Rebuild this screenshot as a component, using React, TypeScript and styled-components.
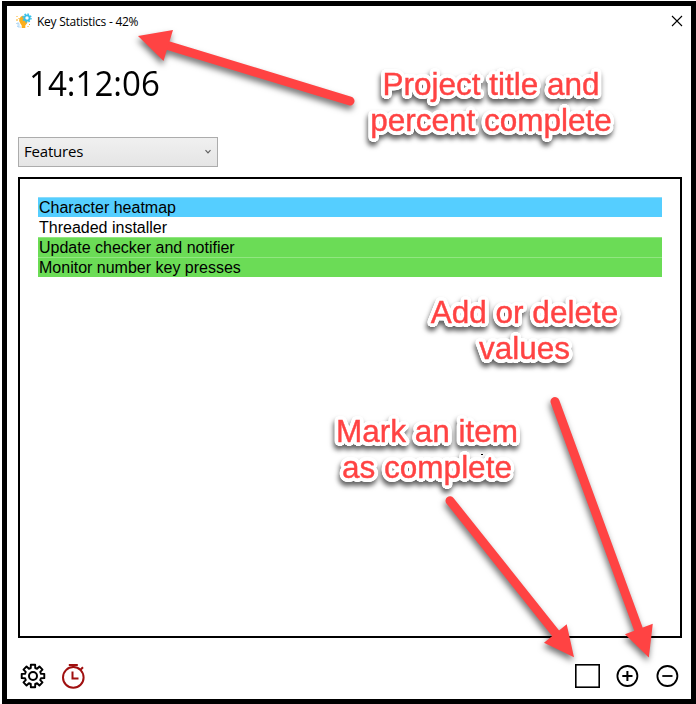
import React from "react";
import styled, { createGlobalStyle } from "styled-components";

const GlobalStyle = createGlobalStyle`
  * { box-sizing: border-box; }
  body { margin: 0; background: #fff; color: #000; overflow: hidden; }
  svg { display: block; }
`;

const Stage = styled.div`
  position: relative;
  width: 696px;
  height: 704px;
  padding: 1px 0 0 2px;
  overflow: hidden;
`;

const Window = styled.main`
  display: flex;
  flex-direction: column;
  width: 694px;
  height: 703px;
  border: 5px solid #000;
  padding: 0 9px 0 11px;
  background: #fff;
`;

const TitleBar = styled.header`
  display: flex;
  align-items: center;
  height: 30px;
  margin-left: -3px;
`;

const Title = styled.h1`
  flex: 1;
  margin: 2px 0 0 5px;
  font: 400 12px/16px "Open Sans", sans-serif;
  letter-spacing: -0.25px;
  white-space: nowrap;
`;

const CloseButton = styled.button`
  display: flex;
  margin-right: -1px;
  padding: 0;
  border: 0;
  background: none;
`;

const Clock = styled.div`
  height: 50px;
  margin: 21px 0 0 11px;
  font: 400 35.5px/50px "Open Sans", sans-serif;
  transform: scaleX(0.932);
  transform-origin: left;
`;

const Select = styled.button`
  display: flex;
  align-items: center;
  justify-content: space-between;
  flex: none;
  width: 200px;
  height: 30px;
  margin-top: 30px;
  padding: 0 5px 1px;
  border: 1px solid #acacac;
  background: linear-gradient(#f0f0f0, #e5e5e5);
  color: #000;
  font: 400 15px/27px "Open Sans", sans-serif;
  letter-spacing: -0.2px;
`;

const List = styled.ul`
  flex: none;
  height: 461px;
  margin: 10px 0 0;
  padding: 18px;
  border: 2px solid #000;
  list-style: none;
`;

const Item = styled.li<{ $fill: string; $edge: string }>`
  height: 20px;
  padding-left: 1px;
  border-top: 1px solid ${(p) => p.$edge};
  background: ${(p) => p.$fill};
  font: 400 16px/19px "Liberation Sans", Arial, sans-serif;
`;

const Footer = styled.footer`
  display: flex;
  align-items: center;
  gap: 12px;
  height: 28px;
  margin-top: 24px;
`;

const IconButton = styled.button`
  display: flex;
  padding: 0;
  border: 0;
  background: none;
`;

const Spacer = styled.div`
  flex: 1;
`;

const halo = Array.from({ length: 24 }, (_, i) => {
  const a = (i * Math.PI) / 12;
  return `${(3.8 * Math.cos(a)).toFixed(2)}px ${(3.8 * Math.sin(a)).toFixed(2)}px 0 #fff`;
})
  .concat(["2px 0 0 #fff", "-2px 0 0 #fff", "0 2px 0 #fff", "0 -2px 0 #fff"])
  .join(", ");

const Callout = styled.div<{ $x: number; $y: number }>`
  position: absolute;
  left: ${(p) => p.$x}px;
  top: ${(p) => p.$y}px;
  transform: translateX(-50%);
  color: #ff4343;
  font: 400 31.5px/36.4px "Liberation Sans", Arial, sans-serif;
  text-align: center;
  white-space: pre;
  -webkit-text-stroke: 0.4px #ff4343;
  text-shadow: ${halo};
  filter: drop-shadow(-1px 4px 2.5px rgba(0, 0, 0, 0.62));
`;

const Arrows = styled.svg`
  position: absolute;
  left: 0;
  top: 0;
  pointer-events: none;
  filter: drop-shadow(-1px 4px 3px rgba(0, 0, 0, 0.55));
`;

const Speck = styled.i`
  position: absolute;
  left: 481px;
  top: 454px;
  width: 2px;
  height: 1px;
  background: #000;
`;

const rows = [
  { text: "Character heatmap", fill: "#55ceff", edge: "#8bdcfb" },
  { text: "Threaded installer", fill: "#fff", edge: "#fff" },
  { text: "Update checker and notifier", fill: "#6bdc56", edge: "#91e681" },
  { text: "Monitor number key presses", fill: "#6bdc56", edge: "#91e681" },
];

const gearPath = (() => {
  const pts: string[] = [];
  for (let i = 0; i < 8; i++) {
    const a = (i * Math.PI) / 4;
    [
      [-0.27, 8.3],
      [-0.19, 11.5],
      [0.19, 11.5],
      [0.27, 8.3],
    ].forEach(([d, r]) =>
      pts.push(`${(14 + r * Math.sin(a + d)).toFixed(2)} ${(14 - r * Math.cos(a + d)).toFixed(2)}`)
    );
  }
  return `M${pts.join("L")}Z`;
})();

const AppIcon = () => (
  <svg width="17" height="17" viewBox="0 0 17 17">
    <path d="M1 10.5h3v3H2M3 9v5h3" fill="none" stroke="#b9dcf5" />
    <path d="M8.5 2.5a4.8 4.8 0 0 0-3 8.2l1.2 1.8v2.5h3.6v-2.5l2-2.4V7L9 6z" fill="#fcaf1b" />
    <path d="M1.5 3.5h1M3.5 5.5h1M1 7h2" stroke="#fcaf1b" />
    <path d="M14 11.5h1M12.5 13.5h1" stroke="#fcaf1b" />
    <circle cx="12" cy="5" r="2.6" fill="none" stroke="#38bfe8" strokeWidth="1.8" />
    <circle cx="12" cy="5" r="4" fill="none" stroke="#38bfe8" strokeWidth="1.4" strokeDasharray="1.57 1.57" />
  </svg>
);

const Arrow = ({ from, base, head }: { from: string; base: string; head: string }) => (
  <g>
    <path d={`M${from}L${base}`} stroke="#ff4343" strokeWidth="9" strokeLinecap="round" />
    <path d={`M${head}Z`} fill="#ff4343" />
  </g>
);

export default function App() {
  return (
    <Stage>
      <GlobalStyle />
      <Window>
        <TitleBar>
          <AppIcon />
          <Title>Key Statistics - 42%</Title>
          <CloseButton aria-label="Close">
            <svg width="12" height="12" viewBox="0 0 12 12">
              <path d="M1 1l10 10M11 1L1 11" stroke="#000" strokeWidth="1.1" />
            </svg>
          </CloseButton>
        </TitleBar>
        <Clock>14:12:06</Clock>
        <Select>
          Features
          <svg width="8" height="6" viewBox="0 0 8 6">
            <path d="M1.5 1.2L4 3.8l2.5-2.6" fill="none" stroke="#606060" strokeWidth="1.2" />
          </svg>
        </Select>
        <List>
          {rows.map((r) => (
            <Item key={r.text} $fill={r.fill} $edge={r.edge}>
              {r.text}
            </Item>
          ))}
        </List>
        <Footer>
          <IconButton aria-label="Settings">
            <svg width="28" height="28" viewBox="-1 0 28 28">
              <path d={gearPath} fill="none" stroke="#000" strokeWidth="1.9" strokeLinejoin="round" />
              <circle cx="14" cy="14" r="4" fill="none" stroke="#000" strokeWidth="2" />
            </svg>
          </IconButton>
          <IconButton aria-label="Timer">
            <svg width="28" height="28" viewBox="0 0 28 28" fill="none" stroke="#a01010" strokeWidth="2">
              <circle cx="15.3" cy="15.4" r="10.3" />
              <path d="M10.8 3h9M15.3 3v3M22 8.3l3-3M14.5 9.5v7h6" />
            </svg>
          </IconButton>
          <Spacer />
          <IconButton aria-label="Mark complete">
            <svg width="28" height="28" viewBox="0 0 28 28">
              <rect x="1.8" y="2.8" width="23.4" height="22.4" fill="none" stroke="#000" strokeWidth="1.6" />
            </svg>
          </IconButton>
          <IconButton aria-label="Add">
            <svg width="28" height="28" viewBox="0 0 28 28" fill="none" stroke="#000" strokeWidth="1.8">
              <circle cx="13.4" cy="14" r="10" />
              <path d="M8.3 14h10.2M13.4 8.9v10.2" strokeWidth="2" />
            </svg>
          </IconButton>
          <IconButton aria-label="Delete">
            <svg width="28" height="28" viewBox="0 0 28 28" fill="none" stroke="#000" strokeWidth="1.8">
              <circle cx="13.4" cy="14" r="10" />
              <path d="M8.3 14h10.2" />
            </svg>
          </IconButton>
        </Footer>
      </Window>
      <Callout $x={491} $y={66}>{"Project title and\npercent complete"}</Callout>
      <Callout $x={524.5} $y={294}>{"Add or delete\nvalues"}</Callout>
      <Callout $x={427} $y={412.5}>{"Mark an item\nas complete"}</Callout>
      <Speck />
      <Arrows width="696" height="704" viewBox="0 0 696 704">
        <Arrow from="350 101" base="166 45" head="138 36L173 30L163.5 61" />
        <Arrow from="450 500.7" base="557 635" head="574 657.3L566.7 624.3L544 642.7" />
        <Arrow from="555 401.5" base="639.5 632" head="648.8 657.5L652.8 623.8L625 634.3" />
      </Arrows>
    </Stage>
  );
}
